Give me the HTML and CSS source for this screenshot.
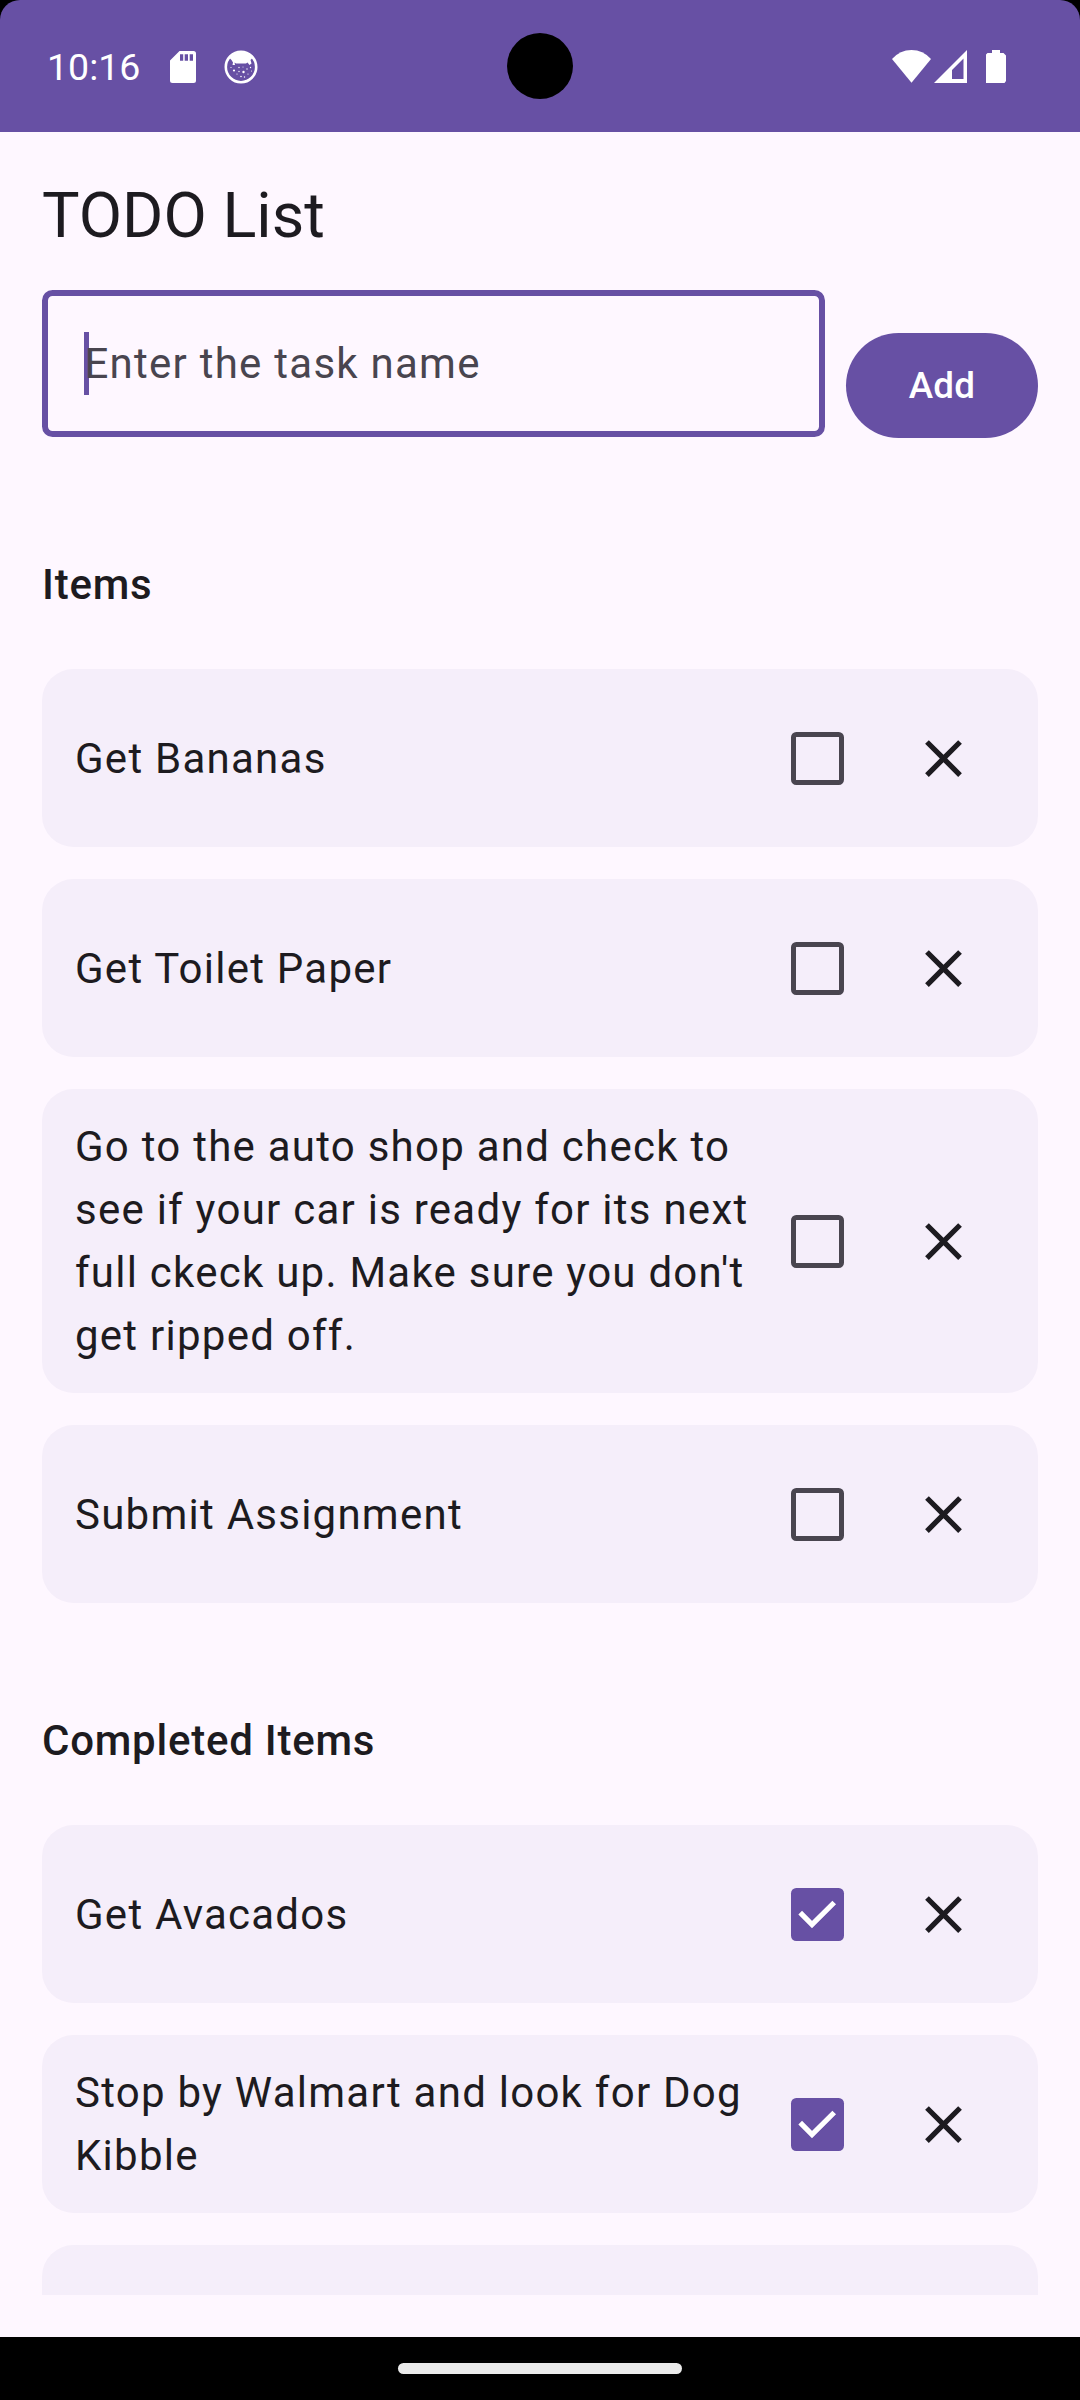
FILE: index.html
```html
<!DOCTYPE html>
<html lang="en">
<head>
<meta charset="utf-8">
<title>TODO List</title>
<link rel="stylesheet" href="styles.css">
</head>
<body>
<svg class="symbols" aria-hidden="true">
  <symbol id="close" viewBox="0 0 24 24"><path d="M19 6.41L17.59 5 12 10.59 6.41 5 5 6.41 10.59 12 5 17.59 6.41 19 12 13.41 17.59 19 19 17.59 13.41 12z"/></symbol>
  <symbol id="check" viewBox="0 0 53 53"><path d="M9.2 24.700L21 36.500L43.2 14.500" fill="none" stroke="#fff" stroke-width="5.2"/></symbol>
</svg>
<div class="screen">
  <div class="status-frame">
    <header class="status-bar">
      <div class="status-group">
        <span class="clock">10:16</span>
        <svg class="icon-sd" viewBox="0 0 26 32"><path fill="#fff" fill-rule="evenodd" d="M9.5 0H23.5Q26 0 26 2.5V29.5Q26 32 23.5 32H2.5Q0 32 0 29.500V9.500ZM10 3.300V9.700H13.200V3.300ZM14.700 3.300V9.700H18V3.300ZM19.700 3.300V9.700H23V3.300Z"/></svg>
        <svg class="icon-cat" viewBox="0 0 34 34">
          <circle cx="17" cy="17" r="15.200" fill="none" stroke="#fff" stroke-width="2.600"/>
          <path fill="#fff" d="M3.500 9Q9 1.500 17 1.500T30.500 9L28 8.500L26.500 10L27.500 13.500L25.500 15L23.500 12.500L22 13.500H12L10.500 12.500L11 15L8.500 15L9 12.500L7.500 10L6 8.500Z"/>
          <g fill="#fff"><circle cx="10" cy="20.500" r="1.100"/><circle cx="19.500" cy="22" r="1.200"/><circle cx="15" cy="17.500" r=".7"/><circle cx="23" cy="19" r=".7"/><circle cx="26.500" cy="17.500" r=".7"/><circle cx="7" cy="17.500" r=".6"/><circle cx="13" cy="24" r=".6"/><circle cx="15" cy="21.500" r=".7"/><circle cx="17" cy="26.500" r=".8"/><circle cx="24" cy="24" r=".6"/><circle cx="20.500" cy="27" r=".7"/><circle cx="27.500" cy="21" r=".5"/><circle cx="19" cy="17" r=".5"/></g>
        </svg>
      </div>
      <div class="status-group">
        <svg class="icon-wifi" viewBox="0 0 39 33"><path fill="#fff" d="M0 9Q8 0 19.500 0T39 9L19.500 32.700Z"/></svg>
        <svg class="icon-cell" viewBox="0 0 33 33"><path fill="#fff" fill-rule="evenodd" d="M33 0V33H0ZM29.500 8.500L18 20V29H29.500Z"/></svg>
        <svg class="icon-battery" viewBox="0 0 20 33"><path fill="#fff" d="M6 0H14V3H17.500L20 5.500V31L18.500 33H0V4.500L1.500 3H6Z"/></svg>
      </div>
      <span class="camera"></span>
    </header>
  </div>

  <main class="content">
    <h1 class="title">TODO List</h1>
    <div class="entry">
      <div class="field"><span class="placeholder">Enter the task name</span></div>
      <button class="add" type="button">Add</button>
    </div>

    <h2 class="section">Items</h2>
    <div class="list">
      <div class="card"><p class="task">Get Bananas</p><span class="box"></span><svg class="close"><use href="#close"/></svg></div>
      <div class="card"><p class="task">Get Toilet Paper</p><span class="box"></span><svg class="close"><use href="#close"/></svg></div>
      <div class="card"><p class="task">Go to the auto shop and check to see if your car is ready for its next full ckeck up. Make sure you don't get ripped off.</p><span class="box"></span><svg class="close"><use href="#close"/></svg></div>
      <div class="card"><p class="task">Submit Assignment</p><span class="box"></span><svg class="close"><use href="#close"/></svg></div>
    </div>

    <h2 class="section">Completed Items</h2>
    <div class="list">
      <div class="card"><p class="task">Get Avacados</p><svg class="box-checked"><use href="#check"/></svg><svg class="close"><use href="#close"/></svg></div>
      <div class="card"><p class="task">Stop by Walmart and look for Dog Kibble</p><svg class="box-checked"><use href="#check"/></svg><svg class="close"><use href="#close"/></svg></div>
      <div class="card"></div>
    </div>
  </main>

  <footer class="nav-bar"><span class="handle"></span></footer>
</div>
</body>
</html>
```
FILE: styles.css
```css
* { box-sizing: border-box; }

body {
  margin: 0;
  background: #000;
  font-family: Roboto, sans-serif;
  color: #1d1b20;
}

.symbols { display: none; }

.screen {
  width: 1080px;
  height: 2400px;
  display: flex;
  flex-direction: column;
  background: #fef7ff;
  overflow: hidden;
}

/* Status bar */
.status-frame { background: #000; }

.status-bar {
  position: relative;
  height: 132px;
  padding: 0 74px 0 47px;
  display: flex;
  justify-content: space-between;
  align-items: center;
  background: #6750a4;
  border-radius: 20px 20px 0 0;
}

.status-group { display: flex; align-items: center; }
.status-group svg { display: block; }

.clock {
  width: 123px;
  font-size: 37.5px;
  line-height: 44px;
  color: #fff;
  padding-top: 2px;
}

.icon-sd { width: 26px; height: 32px; margin-top: 2px; }
.icon-cat { width: 34px; height: 34px; margin: 2px 0 0 28px; }
.icon-wifi { width: 39px; height: 33px; }
.icon-cell { width: 33px; height: 33px; margin-left: 3px; }
.icon-battery { width: 20px; height: 33px; margin-left: 19px; }

.camera {
  position: absolute;
  left: 507px;
  top: 33px;
  width: 66px;
  height: 66px;
  border-radius: 50%;
  background: #000;
}

/* Content */
.content {
  height: 2163px;
  margin-bottom: 42px;
  padding: 42px 42px 0;
  overflow: hidden;
}

.title {
  margin: 0 0 32px;
  font-size: 63px;
  line-height: 84px;
  font-weight: 400;
}

.entry {
  display: flex;
  gap: 21px;
  height: 148px;
  align-items: flex-end;
}

.field {
  flex: 1;
  align-self: flex-start;
  height: 147px;
  display: flex;
  align-items: center;
  padding-left: 36px;
  border: 6px solid #6750a4;
  border-radius: 10.5px;
}

.placeholder {
  width: 100%;
  height: 63px;
  line-height: 63px;
  font-size: 42px;
  letter-spacing: 1.25px;
  text-indent: 0.5px;
  color: #49454f;
  background: linear-gradient(#6750a4, #6750a4) no-repeat 0 0 / 5.25px 63px;
}

.add {
  width: 192px;
  height: 105px;
  padding: 0;
  border: 0;
  border-radius: 52.5px;
  background: #6750a4;
  color: #fff;
  font-family: inherit;
  font-size: 36.75px;
  font-weight: 500;
  letter-spacing: 0.2625px;
}

.section {
  margin: 115px 0 53px;
  font-size: 42px;
  line-height: 63px;
  font-weight: 500;
  letter-spacing: 0.76px;
}

.list + .section { margin-top: 106px; }

.list { display: flex; flex-direction: column; gap: 32px; }

.card {
  min-height: 178px;
  padding: 26px 63px 26px 33px;
  display: flex;
  align-items: center;
  background: #f5eefa;
  border-radius: 31.5px;
}

.task {
  flex: 1;
  margin: 0 37px 0 0;
  font-size: 42px;
  line-height: 63px;
  letter-spacing: 1.25px;
}

.box, .box-checked {
  width: 53px;
  height: 53px;
  border-radius: 5.25px;
}

.box { border: 5px solid #49454f; }
.box-checked { background: #6750a4; }

.close {
  width: 63px;
  height: 63px;
  margin-left: 68px;
  fill: #1d1b20;
}

/* Navigation */
.nav-bar {
  height: 63px;
  display: flex;
  justify-content: center;
  align-items: center;
  background: #000;
}

.handle {
  width: 284px;
  height: 11px;
  border-radius: 6px;
  background: #ebebeb;
}
```
